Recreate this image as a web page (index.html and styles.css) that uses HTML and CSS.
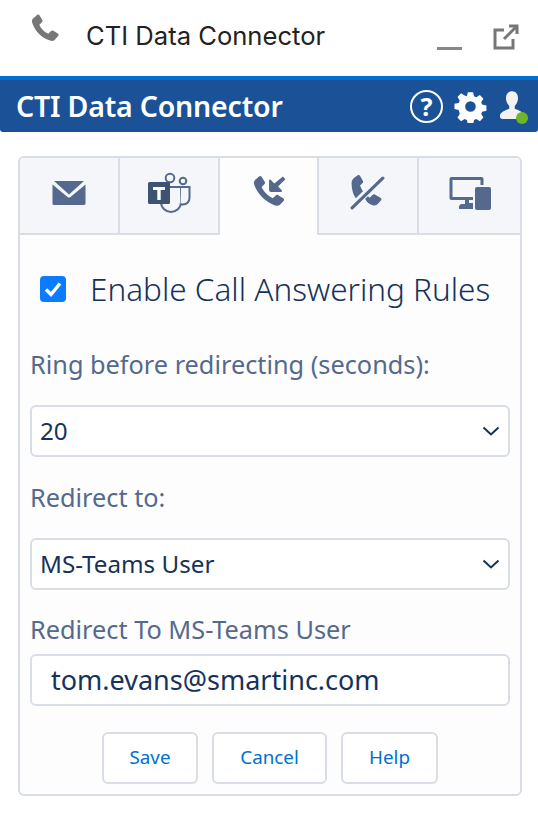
FILE: index.html
```html
<!DOCTYPE html>
<html>
<head>
    <title>CTI Data Connector</title>
    <link rel="stylesheet" href="styles.css">
</head>
<body>

<div class="titlebar">
    <svg class="phone-icon" viewBox="0 0 32 32"><path d="M3 5.5 7.5 1.5c1-.8 2-.6 2.600.4l3 5c.5.9.4 1.700-.4 2.400L10 12c1.500 4 5.500 8 9.500 9.500l2.900-2.800c.7-.7 1.600-.8 2.500-.3l4.700 3c1 .6 1.200 1.700.4 2.600l-3.800 4.200c-1 1-2.500 1.300-4 .9C12 26 5 18.500 2.300 9.500 1.900 8 2.100 6.500 3 5.500Z"/></svg>
    <span class="titlebar-text">CTI Data Connector</span>
    <span class="minimize"></span>
    <svg class="popout-icon" viewBox="0 0 26 26"><path d="M11 6H2v18h18v-9" /><path d="M11 15 24 2M16 2h8v8" /></svg>
</div>

<div class="appbar">
    <span class="appbar-title">CTI Data Connector</span>
    <div class="appbar-icons">
        <span class="help-icon">?</span>
        <svg class="gear-icon" viewBox="0 0 32 32"><path fill-rule="evenodd" d="M13 0h6l1 4.500 2.600 1.100 4-2.500 4 4.200-2.500 3.900 1.100 2.700 4.800 1v6l-4.800 1-1.100 2.700 2.500 3.900-4 4.200-4-2.500-2.600 1.100-1 4.700h-6l-1-4.700-2.600-1.100-4 2.500-4-4.200 2.500-3.900L2.800 19.900-2 19v-6l4.800-1 1.100-2.700L1.400 5.300l4-4.200 4 2.500L12 4.500Zm3 10a6 6 0 1 0 0 12 6 6 0 0 0 0-12Z" transform="translate(2.200 2.200) scale(.86)"/></svg>
        <span class="user-icon">
            <svg viewBox="0 0 28 32"><path d="M14 0c4 0 6.500 3 6.500 7.500 0 3.500-1.500 6.500-3.500 8.500v3c3 1.500 10 3 10 8 0 2-1 3-3 3H4c-2 0-3-1-3-3 0-5 7-6.500 10-8v-3C9 14 7.500 11 7.500 7.500 7.500 3 10 0 14 0Z"/></svg>
            <span class="status-dot"></span>
        </span>
    </div>
</div>

<div class="panel">
    <div class="tabs">
        <div class="tab">
            <svg class="tab-icon mail-icon" viewBox="0 0 34 26"><path d="M2 1h30L17 14.500Z"/><path d="M.5 4.500v19c0 1 .8 1.500 1.500 1.500h30c.8 0 1.500-.6 1.500-1.500v-19L18.500 17c-1 .8-2 .8-3 0Z"/></svg>
        </div>
        <div class="tab">
            <svg class="tab-icon teams-icon" viewBox="0 0 44 42">
                <circle class="teams-line" cx="23" cy="6" r="4.300"/>
                <circle class="teams-line" cx="36" cy="9" r="3.300"/>
                <path class="teams-line" d="M14 15v15c0 6 5 10 10 10s10-4 10-10V15H14Z"/>
                <path class="teams-line" d="M34 15h8.500v11c0 4-3 6.500-6.500 6.500-1 0-1.500 0-2.500-.5"/>
                <rect class="teams-box" x="1" y="10" width="22" height="22" rx="1.500"/>
                <path class="teams-t" d="M6 15h12v3h-4.300v10h-3.400V18H6Z"/>
            </svg>
        </div>
        <div class="tab tab-active">
            <svg class="tab-icon call-icon" viewBox="0 0 34 34"><path d="M5 3.500 8.500.5c1-.8 2-.6 2.600.4l2.800 4.500c.5.9.400 1.700-.4 2.400L11 10.500c1.500 4 6.500 9 10.500 10.500l2.800-2.600c.7-.7 1.600-.8 2.500-.3l4.500 2.800c1 .6 1.200 1.700.4 2.600l-3.400 3.600c-1 1-2.500 1.300-4 .9C15 25 6.500 16.500 3.800 7.500 3.400 6 3.900 4.500 5 3.500Z"/><path d="M31 .5l2.500 2.500-7 7 3.500 3.500c.5.600.2 1.500-.7 1.500H19.500c-.8 0-1.500-.7-1.500-1.500V4.200c0-.9 1-1.200 1.500-.7l3.500 3.500Z"/></svg>
        </div>
        <div class="tab">
            <svg class="tab-icon call-icon" viewBox="0 0 34 34"><path d="M4 2.500 7 .5c1-.7 2-.5 2.600.5l2.500 4.500c.5.9.4 1.700-.4 2.400L9.500 10c.5 1.800 1.400 3.500 2.700 5.300L5.500 22C2.500 17.500 1.500 12.500 1.500 7.500c0-2 1-3.800 2.500-5ZM14.500 22.500 17 20l1.500 1.500 2.800-2.600c.7-.7 1.600-.8 2.500-.3l5 3c1 .6 1.200 1.700.4 2.600l-3 3.300c-1 1-2.500 1.500-4 1.200-3.700-.7-6.200-2.800-7.700-5.700Z"/><path class="slash" d="M2 31 31 3"/></svg>
        </div>
        <div class="tab">
            <svg class="tab-icon device-icon" viewBox="0 0 42 34"><path fill-rule="evenodd" d="M2.500 1h30c1.200 0 2 .8 2 2v6h-3V4h-28v17H24v3H2.500c-1.200 0-2-.8-2-2V3c0-1.200.8-2 2-2ZM16 24h4v3h4v6H10v-2c0-1.500 1-3 3-3h3Z"/><rect x="26" y="11" width="16" height="23" rx="2"/></svg>
        </div>
    </div>

    <div class="panel-body">
        <label class="enable-row">
            <span class="checkbox">
                <svg viewBox="0 0 26 26"><path d="M6 13.500l5 5L20 7.500"/></svg>
            </span>
            Enable Call Answering Rules
        </label>

        <div class="field-label field-label-first">Ring before redirecting (seconds):</div>
        <div class="select-box">
            <span>20</span>
            <svg class="chevron" viewBox="0 0 18 10"><path d="M1.500 1.500 9 8.500l7.500-7"/></svg>
        </div>

        <div class="field-label">Redirect to:</div>
        <div class="select-box">
            <span>MS-Teams User</span>
            <svg class="chevron" viewBox="0 0 18 10"><path d="M1.500 1.500 9 8.500l7.500-7"/></svg>
        </div>

        <div class="field-label field-label-last">Redirect To MS-Teams User</div>
        <div class="text-box">tom.evans@smartinc.com</div>

        <div class="buttons">
            <button class="btn btn-save">Save</button>
            <button class="btn btn-cancel">Cancel</button>
            <button class="btn btn-help">Help</button>
        </div>
    </div>
</div>

</body>
</html>
```

FILE: styles.css
```css
body {
    font-family: "Noto Sans", Arial, sans-serif;
    margin: 0;
    padding: 0;
    background-color: #fff;
    color: #16325c;
}
.titlebar {
    height: 76px;
    display: flex;
    align-items: flex-start;
    box-sizing: border-box;
}
.phone-icon {
    width: 30px;
    height: 31px;
    fill: #777;
    margin: 13px 0 0 30px;
}
.titlebar-text {
    font-family: Inter, sans-serif;
    font-size: 25.6px;
    line-height: 30px;
    color: #222;
    margin: 21px 0 0 26px;
    flex-grow: 1;
}
.minimize {
    width: 25px;
    height: 3px;
    background-color: #888;
    margin: 47px 31px 0 0;
}
.popout-icon {
    width: 26px;
    height: 26px;
    margin: 24px 19px 0 0;
    fill: none;
    stroke: #777;
    stroke-width: 3;
}
.appbar {
    height: 52px;
    border-top: 4px solid #0070d2;
    background-color: #1b5297;
    display: flex;
    align-items: center;
    justify-content: space-between;
    padding: 0 13px 0 16px;
    border-radius: 0 0 3px 3px;
}
.appbar-title {
    font-size: 28.5px;
    font-weight: 600;
    color: #fff;
    letter-spacing: -0.2px;
}
.appbar-icons {
    display: flex;
    align-items: center;
    gap: 11px;
}
.help-icon {
    width: 29px;
    height: 29px;
    border: 2px solid #fff;
    border-radius: 50%;
    color: #fff;
    font-size: 25px;
    font-weight: 700;
    line-height: 29px;
    text-align: center;
}
.gear-icon {
    width: 33px;
    height: 33px;
    fill: #fff;
}
.user-icon {
    position: relative;
    width: 26px;
    height: 30px;
    margin-left: 1px;
}
.user-icon svg {
    display: block;
    width: 26px;
    height: 30px;
    fill: #f2f2f2;
}
.status-dot {
    position: absolute;
    right: -3px;
    bottom: -3px;
    width: 12px;
    height: 12px;
    border-radius: 50%;
    background-color: #6fb52c;
}
.panel {
    margin: 24px 16px 0 18px;
    height: 640px;
    box-sizing: border-box;
    border: 2px solid #d8dde6;
    border-radius: 6px;
    background-color: #fdfdfe;
    overflow: hidden;
}
.tabs {
    display: flex;
    height: 77px;
}
.tab {
    width: 99.8px;
    box-sizing: border-box;
    display: flex;
    align-items: center;
    justify-content: center;
    background-color: #f4f6fa;
    border-right: 2px solid #d8dde6;
    border-bottom: 2px solid #d8dde6;
}
.tab:last-child {
    flex: 1;
    border-right: none;
}
.tab-active {
    background-color: #fdfdfe;
    border-bottom: none;
}
.tab-icon {
    fill: #54698d;
    margin-top: -6px;
}
.mail-icon {
    width: 34px;
    height: 26px;
}
.call-icon {
    width: 36px;
    height: 36px;
}
.device-icon {
    width: 42px;
    height: 34px;
}
.slash {
    fill: none;
    stroke: #54698d;
    stroke-width: 3;
    stroke-linecap: round;
}
.teams-icon {
    height: 42px;
    width: 44px;
}
.teams-line {
    fill: #f4f6fa;
    stroke: #54698d;
    stroke-width: 2;
}
.teams-box {
    fill: #3e5272;
}
.teams-t {
    fill: #fff;
}
.panel-body {
    padding: 0 10px;
}
.enable-row {
    display: flex;
    align-items: center;
    gap: 24px;
    margin: 33px 0 0 10px;
    font-size: 31.5px;
    font-weight: 300;
    line-height: 42px;
    color: #16325c;
}
.checkbox {
    width: 26px;
    height: 26px;
    border-radius: 4px;
    background-color: #0b7bff;
    flex-shrink: 0;
}
.checkbox svg {
    display: block;
    fill: none;
    stroke: #fff;
    stroke-width: 3.500;
}
.field-label {
    font-size: 25.3px;
    line-height: 34px;
    color: #54698d;
    margin: 23px 0 0;
}
.field-label-first {
    margin: 37px 0 0;
}
.field-label-last {
    margin: 22px 0 0;
}
.select-box {
    height: 52px;
    box-sizing: border-box;
    border: 2px solid #d8dde6;
    border-radius: 6px;
    background-color: #fff;
    display: flex;
    align-items: center;
    justify-content: space-between;
    padding: 0 8px 2px;
    font-size: 24.2px;
    margin-top: 24px;
}
.chevron {
    width: 18px;
    height: 10px;
    margin-top: 2px;
    fill: none;
    stroke: #16325c;
    stroke-width: 2;
}
.text-box {
    height: 52px;
    box-sizing: border-box;
    border: 2px solid #d8dde6;
    border-radius: 6px;
    background-color: #fff;
    padding: 0 19px;
    font-size: 27px;
    line-height: 47px;
    margin-top: 8px;
}
.buttons {
    display: flex;
    justify-content: center;
    gap: 14px;
    margin-top: 26px;
}
.btn {
    height: 52px;
    box-sizing: border-box;
    background-color: #fff;
    border: 2px solid #d8dde6;
    border-radius: 6px;
    color: #0070d2;
    font-family: "Noto Sans", Arial, sans-serif;
    font-size: 18.8px;
    padding: 0 0 2px;
}
.btn-save {
    width: 96px;
}
.btn-cancel {
    width: 115px;
}
.btn-help {
    width: 97px;
}
```
